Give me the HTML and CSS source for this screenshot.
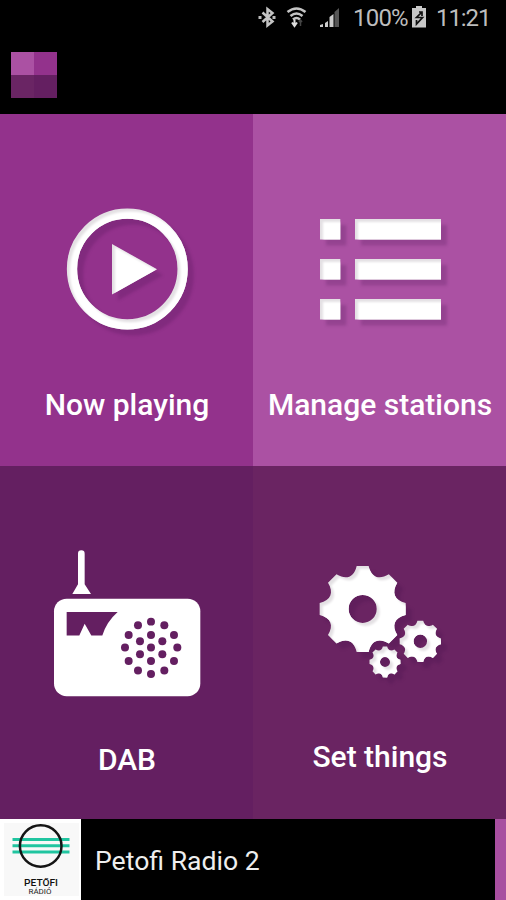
FILE: index.html
```html
<!DOCTYPE html>
<html lang="en">
<head>
    <meta charset="UTF-8">
    <meta name="viewport" content="width=device-width, initial-scale=1.0">
    <title>Radio</title>
    <link rel="stylesheet" href="styles.css">
</head>
<body>
    <div class="status-bar">
      <svg class="status-icons" width="90" height="36" viewBox="0 0 90 36">
        <!-- bluetooth -->
        <path d="M4.500 12.500l10 9-5 4V9l5 4-10 9" fill="none" stroke="#c4c4c4" stroke-width="2.500"/>
        <path d="M0.500 17.500h3M14.500 17.500h3" stroke="#bbb" stroke-width="3"/>
        <!-- wifi -->
        <path d="M29.500 12q9-7 18 0M32.500 16q6-5 12 0M35 19.500q3.500-3 7 0" fill="none" stroke="#c4c4c4" stroke-width="2.600"/>
        <path d="M36.500 19.500v5M34 22.500l2.500 3.500 2.500-3.500" fill="none" stroke="#ddd" stroke-width="2"/>
        <path d="M42.500 26v-5M41 22l1.500-2 1.500 2" fill="none" stroke="#444" stroke-width="1.500"/>
        <!-- signal -->
        <path d="M62 27v-2l3-1v3zM67 27v-4l3-2v6zM71.500 27V17l4-3v13z" fill="#ccc"/>
        <path d="M76.500 27V12l4.500-4v19z" fill="#555"/>
      </svg>
      <span class="percent">100%</span>
      <svg class="battery" width="14" height="36" viewBox="0 0 14 36">
        <path d="M0 8h4V6h6v2h4v19.500H0z" fill="#c8c8c8"/>
        <path d="M10 12L4.500 17.500h6L4.500 24v-4M10 16v-4H7" fill="none" stroke="#111" stroke-width="1.700"/>
      </svg>
      <span class="clock">11:21</span>
    </div>

    <div class="header">
      <div class="logo">
        <div class="logo-light"></div>
        <div class="logo-mid"></div>
        <div class="logo-dark"></div>
        <div class="logo-plum"></div>
      </div>
    </div>

    <div class="tiles">
      <div class="tile now-playing">
        <svg class="icon" viewBox="0 0 253 240">
          <defs>
            <filter id="raised" x="-20%" y="-20%" width="140%" height="140%" color-interpolation-filters="sRGB">
              <feGaussianBlur in="SourceAlpha" stdDeviation="1.800" result="blur"/>
              <feOffset in="blur" dx="6" dy="6" result="drop"/>
              <feFlood flood-color="#3c0a46" flood-opacity="0.2"/>
              <feComposite in2="drop" operator="in" result="shadow"/>
              <feFlood flood-color="#e4e1e4"/>
              <feComposite in2="SourceAlpha" operator="in" result="edge"/>
              <feGaussianBlur in="SourceAlpha" stdDeviation="0.9"/>
              <feOffset dx="2.500" dy="2.500" result="inner"/>
              <feComposite in="SourceGraphic" in2="inner" operator="in" result="face"/>
              <feMerge>
                <feMergeNode in="shadow"/>
                <feMergeNode in="edge"/>
                <feMergeNode in="face"/>
              </feMerge>
            </filter>
          </defs>
          <g filter="url(#raised)">
            <circle cx="127.300" cy="155" r="55.300" fill="none" stroke="#fff" stroke-width="10.300"/>
            <path d="M112 130l45 25.300-45 25.300z" fill="#fff"/>
          </g>
        </svg>
        <span class="label">Now playing</span>
      </div>

      <div class="tile stations">
        <svg class="icon" viewBox="0 0 253 240">
          <g fill="#fff" filter="url(#raised)">
            <rect x="67" y="105" width="20.300" height="20.500"/>
            <rect x="102" y="105" width="86" height="20.500"/>
            <rect x="67" y="145" width="20.300" height="20.500"/>
            <rect x="102" y="145" width="86" height="20.500"/>
            <rect x="67" y="185" width="20.300" height="20.500"/>
            <rect x="102" y="185" width="86" height="20.500"/>
          </g>
        </svg>
        <span class="label">Manage stations</span>
      </div>

      <div class="tile dab">
        <svg class="icon" viewBox="0 0 253 240">
          <g transform="translate(40 74.300) scale(0.3333)">
            <path d="M114 40a10 10 0 0 1 20 0v92l19 29H97l17-29z" fill="#fff"/>
            <rect x="42" y="175" width="439" height="293" rx="38" fill="#fff"/>
            <g fill="#641f61">
              <path d="M80 215h153q-34 30-46 71h-33l-20-36-16 36H80z"/>
              <circle cx="333" cy="244" r="12"/>
              <circle cx="294" cy="255" r="12"/>
              <circle cx="373" cy="255" r="12"/>
              <circle cx="266" cy="284" r="12"/>
              <circle cx="333" cy="284" r="12"/>
              <circle cx="402" cy="284" r="12"/>
              <circle cx="300" cy="303" r="12"/>
              <circle cx="367" cy="303" r="12"/>
              <circle cx="255" cy="322" r="12"/>
              <circle cx="333" cy="322" r="12"/>
              <circle cx="412" cy="322" r="12"/>
              <circle cx="300" cy="342" r="12"/>
              <circle cx="367" cy="342" r="12"/>
              <circle cx="266" cy="362" r="12"/>
              <circle cx="333" cy="362" r="12"/>
              <circle cx="402" cy="362" r="12"/>
              <circle cx="294" cy="391" r="12"/>
              <circle cx="373" cy="391" r="12"/>
              <circle cx="333" cy="401" r="12"/>
            </g>
          </g>
        </svg>
        <span class="label">DAB</span>
      </div>

      <div class="tile settings">
        <svg class="icon" viewBox="0 0 253 240">
          <defs>
            <path id="gear" fill-rule="evenodd" d="M-18-129L18-129C26-95 49-86 78.500-104L104-78.500C86-49 95-26 129-18L129 18C95 26 86 49 104 78.500L78.500 104C49 86 26 95 18 129L-18 129C-26 95-49 86-78.500 104L-104 78.500C-86 49-95 26-129 18L-129-18C-95-26-86-49-104-78.500L-78.500-104C-49-86-26-95-18-129ZM-42 0a42 42 0 1 0 84 0a42 42 0 1 0-84 0Z"/>
          </defs>
          <g fill="#fff" filter="url(#raised)">
            <g transform="translate(52 84.300) scale(0.3333)">
              <use href="#gear" transform="translate(173 176)"/>
              <use href="#gear" transform="translate(346 273) scale(0.48)"/>
              <use href="#gear" transform="translate(240 335) scale(0.36)"/>
            </g>
          </g>
        </svg>
        <span class="label">Set things</span>
      </div>
    </div>

    <div class="player">
      <svg class="station-logo" width="81" height="81" viewBox="0 0 81 81">
        <rect width="81" height="81" fill="#fff"/>
        <rect x="4" y="4" width="75" height="73" fill="#f8f8f8"/>
        <path d="M12.500 20.500h57M12.500 26.800h57M12.500 33h57" stroke="#20c5a0" stroke-width="3"/>
        <circle cx="40.700" cy="27" r="20.800" fill="none" stroke="#151515" stroke-width="2.500"/>
        <text class="logo-name" x="41" y="67" textLength="34" lengthAdjust="spacingAndGlyphs">PETŐFI</text>
        <text class="logo-sub" x="40" y="74.500" textLength="23" lengthAdjust="spacingAndGlyphs">RÁDIÓ</text>
      </svg>
      <span class="station-name">Petofi Radio 2</span>
      <div class="edge"></div>
    </div>
</body>
</html>
```

FILE: styles.css
```css
body {
  margin: 0;
  width: 506px;
  height: 900px;
  overflow: hidden;
  background-color: #000;
  color: #fff;
  font-family: Roboto, sans-serif;
}
.status-bar {
  display: flex;
  height: 36px;
  padding-left: 258px;
  color: #bdbdbd;
  font-size: 24px;
  line-height: 36px;
}
.percent {
  width: 56px;
  margin-left: 5px;
  letter-spacing: -0.8px;
}
.battery {
  margin-left: 3px;
}
.clock {
  margin-left: 10px;
  letter-spacing: -1.1px;
}
.header {
  height: 78px;
}
.logo {
  display: grid;
  grid-template-columns: 23px 23px;
  grid-template-rows: 23px 23px;
  padding: 16px 0 0 11px;
}
.logo-light {
  background-color: #ab51a3;
}
.logo-mid {
  background-color: #93328c;
}
.logo-dark {
  background-color: #6a2564;
}
.logo-plum {
  background-color: #641f61;
}
.tiles {
  display: grid;
  grid-template-columns: 253px 253px;
  grid-template-rows: 352px 353px;
}
.tile {
  display: flex;
  flex-direction: column;
  align-items: center;
}
.now-playing {
  background-color: #93328c;
}
.stations {
  background-color: #ab51a3;
}
.dab {
  background-color: #641f61;
}
.settings {
  background-color: #6a2462;
}
.icon {
  width: 253px;
  height: 240px;
}
.label {
  margin-top: 31px;
  padding-left: 1px;
  font-size: 30px;
  font-weight: 500;
  line-height: 40px;
  white-space: nowrap;
}
.dab .label {
  margin-top: 34px;
}
.player {
  display: flex;
  align-items: center;
  height: 81px;
}
.station-name {
  margin: 3px 0 0 14px;
  font-size: 26.6px;
  line-height: 40px;
  color: #eee;
}
.edge {
  width: 11px;
  height: 81px;
  margin-left: auto;
  background-color: #a84fa0;
}
.logo-name {
  font-size: 9px;
  font-weight: 500;
  text-anchor: middle;
  fill: #111;
}
.logo-sub {
  font-size: 7px;
  text-anchor: middle;
  fill: #222;
}
```
